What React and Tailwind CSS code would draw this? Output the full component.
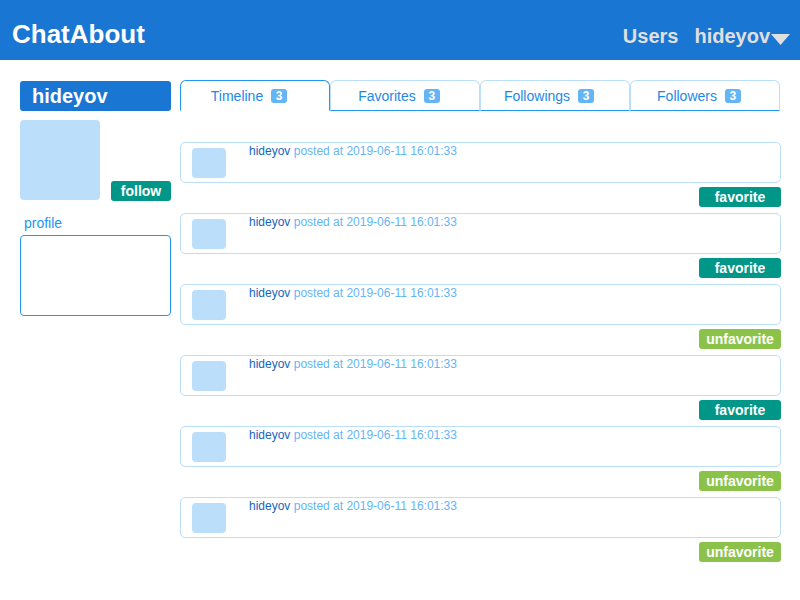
import React from 'react';

const posts = [
  { fav: false },
  { fav: false },
  { fav: true },
  { fav: false },
  { fav: true },
  { fav: true },
];

const tabs = ['Timeline', 'Favorites', 'Followings', 'Followers'];

export default function App() {
  return (
    <div className="min-h-screen bg-white font-['Liberation_Sans',Arial,sans-serif]">
      {/* Header */}
      <header className="h-[60px] bg-[#1976d2] flex items-end justify-between pl-3 pr-[10px]">
        <div className="text-white font-bold text-[26px] leading-[30px] pb-[11px]">ChatAbout</div>
        <div className="flex items-end pb-[12px] text-[#e0e0e0] font-bold text-[20px] leading-[24px]">
          <span>Users</span>
          <span className="ml-4">hideyov</span>
          <svg width="19" height="11" viewBox="0 0 19 11" className="ml-px mb-[3px]">
            <polygon points="0,0 19,0 9.5,11" fill="#e0e0e0" />
          </svg>
        </div>
      </header>

      {/* Body */}
      <div className="flex gap-[9px] px-5 pt-5">
        {/* Left column */}
        <div className="w-[151px] shrink-0">
          <div className="mt-px h-[30px] rounded-[3px] bg-[#1976d2] pl-3 text-white font-bold text-[20px] leading-[30px]">
            hideyov
          </div>
          <div className="mt-[9px] flex items-end justify-between">
            <div className="w-20 h-20 rounded-[4px] bg-[#bbdefb]" />
            <button className="w-[60px] h-[20px] -mb-px rounded-[3px] bg-[#009688] text-white font-bold text-[14px] leading-[20px]">
              follow
            </button>
          </div>
          <div className="mt-[15px] pl-1 text-[14px] leading-[16px] text-[#2196f3]">profile</div>
          <div className="mt-1 h-[81px] rounded-[4px] border border-[#2196f3]" />
        </div>

        {/* Right column */}
        <div className="w-[601px] shrink-0">
          <div className="flex">
            {tabs.map((t, i) => (
              <div
                key={t}
                className={
                  i === 0
                    ? 'w-[150px] h-[31px] flex items-center justify-center pr-3 rounded-t-[6px] border border-[#2196f3] border-b-white'
                    : 'w-[150px] h-[31px] flex items-center justify-center pr-3 rounded-t-[6px] border border-[#bbdefb] border-b-[#2196f3]'
                }
              >
                <span className="text-[14px] leading-[16px] text-[#1e88e5]">{t}</span>
                <span className="ml-2 w-4 h-[14px] rounded-[3px] bg-[#64b5f6] text-white font-bold text-[12px] leading-[14px] text-center">
                  3
                </span>
              </div>
            ))}
          </div>

          <div className="mt-[31px]">
            {posts.map((p, i) => (
              <div key={i}>
                <div className="h-[41px] rounded-[5px] border border-[#bbdefb] flex">
                  <div className="ml-[11px] mt-[5px] w-[34px] h-[30px] rounded-[4px] bg-[#bbdefb]" />
                  <div className="ml-[23px] mt-px text-[12px] leading-[14px]">
                    <span className="text-[#1565c0]">hideyov</span>
                    <span className="text-[#64b5f6]"> posted at 2019-06-11 16:01:33</span>
                  </div>
                </div>
                <div className="flex justify-end mt-1 mb-[6px]">
                  <button
                    className={
                      p.fav
                        ? 'w-[82px] h-[20px] rounded-[3px] bg-[#8bc34a] text-white font-bold text-[14px] leading-[20px]'
                        : 'w-[82px] h-[20px] rounded-[3px] bg-[#009688] text-white font-bold text-[14px] leading-[20px]'
                    }
                  >
                    {p.fav ? 'unfavorite' : 'favorite'}
                  </button>
                </div>
              </div>
            ))}
          </div>
        </div>
      </div>
    </div>
  );
}
